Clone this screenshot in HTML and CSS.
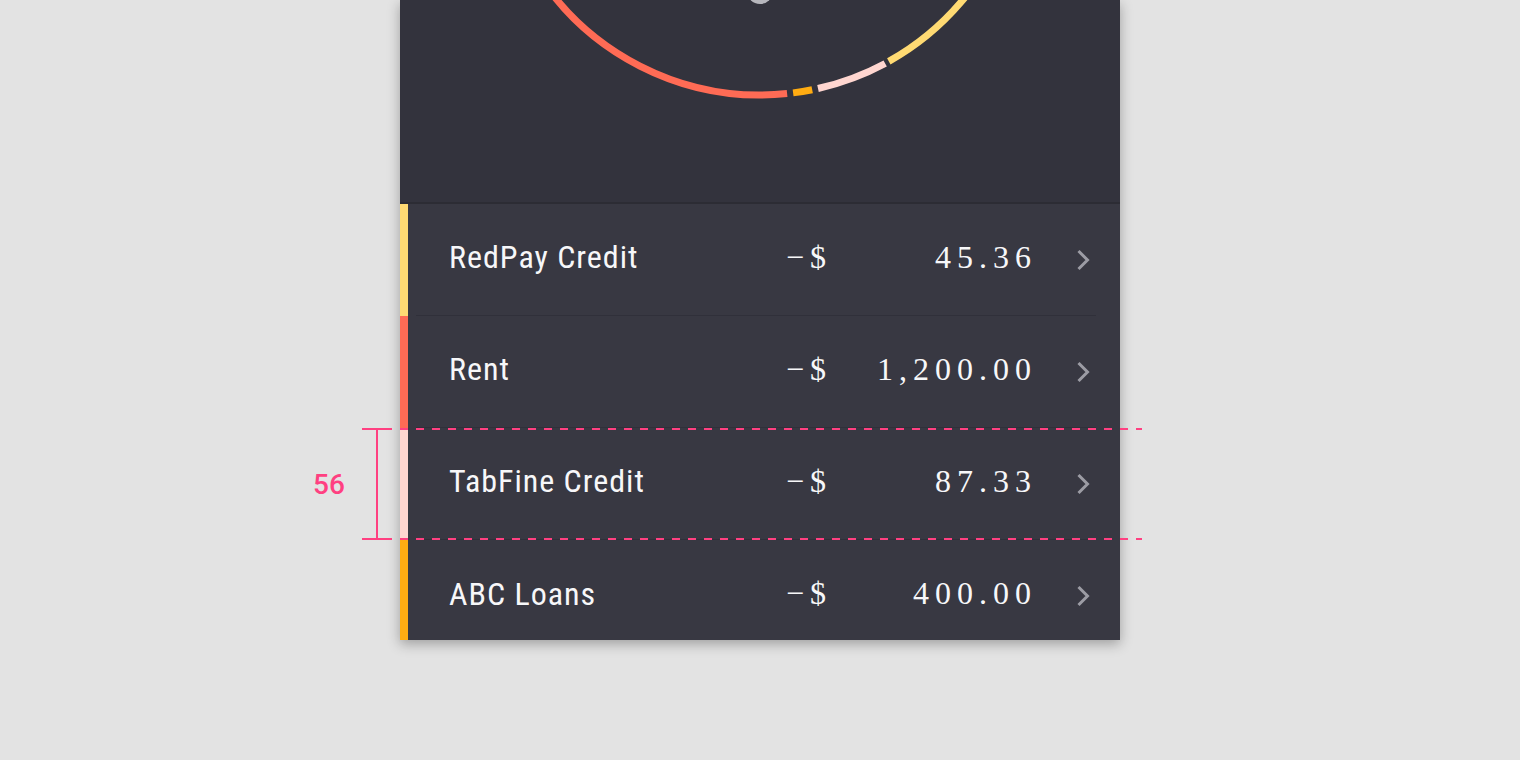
FILE: index.html
```html
<!DOCTYPE html>
<html lang="en">
<head>
    <meta charset="UTF-8">
    <meta name="viewport" content="width=device-width, initial-scale=1.0">
    <title>Spending Breakdown</title>
    <link rel="stylesheet" href="styles.css">
</head>
<body>
    <div class="page">
        <div class="card">
            <!-- Donut chart (top cut off) -->
            <div class="chart">
                <svg width="720" height="202" viewBox="0 0 720 202">
                    <circle cx="360" cy="-9" r="13" fill="#b6b6bc"/>
                    <g fill="none" stroke-width="7">
                        <path d="M131.4 -37 A264 264 0 0 0 387.1 93.6" stroke="#ff6b55"/>
                        <path d="M393.1 92.9 A264 264 0 0 0 412.2 89.8" stroke="#ffac12"/>
                        <path d="M418.0 88.5 A264 264 0 0 0 485.2 63.5" stroke="#ffd6d0"/>
                        <path d="M488.8 61.4 A264 264 0 0 0 608.1 -78.7" stroke="#ffda73"/>
                    </g>
                </svg>
            </div>

            <!-- Payments -->
            <div class="list">
                <div class="row row-yellow">
                    <div class="row-body">
                        <span class="name">RedPay Credit</span>
                        <span class="sign">&minus;$</span>
                        <span class="amount">45.36</span>
                        <svg class="chevron" width="18" height="24" viewBox="0 0 18 24"><path d="M4.5 3 L13.5 12 L4.5 21" fill="none" stroke="#9c9ca4" stroke-width="3"/></svg>
                    </div>
                </div>
                <div class="row row-red">
                    <div class="row-body">
                        <span class="name">Rent</span>
                        <span class="sign">&minus;$</span>
                        <span class="amount">1,200.00</span>
                        <svg class="chevron" width="18" height="24" viewBox="0 0 18 24"><path d="M4.5 3 L13.5 12 L4.5 21" fill="none" stroke="#9c9ca4" stroke-width="3"/></svg>
                    </div>
                </div>
                <div class="row row-pink">
                    <div class="row-body">
                        <span class="name">TabFine Credit</span>
                        <span class="sign">&minus;$</span>
                        <span class="amount">87.33</span>
                        <svg class="chevron" width="18" height="24" viewBox="0 0 18 24"><path d="M4.5 3 L13.5 12 L4.5 21" fill="none" stroke="#9c9ca4" stroke-width="3"/></svg>
                    </div>
                </div>
                <div class="row row-orange">
                    <div class="row-body">
                        <span class="name">ABC Loans</span>
                        <span class="sign">&minus;$</span>
                        <span class="amount">400.00</span>
                        <svg class="chevron" width="18" height="24" viewBox="0 0 18 24"><path d="M4.5 3 L13.5 12 L4.5 21" fill="none" stroke="#9c9ca4" stroke-width="3"/></svg>
                    </div>
                </div>
            </div>
        </div>

        <!-- Redline annotation -->
        <div class="guide guide-top"></div>
        <div class="guide guide-bottom"></div>
        <div class="measure">
            <span class="measure-label">56</span>
            <div class="measure-bar"></div>
        </div>
    </div>
</body>
</html>
```

FILE: styles.css
```css
body {
    margin: 0;
    background: #e3e3e3;
    font-family: "Roboto Condensed", Roboto, sans-serif;
    overflow: hidden;
}
.page {
    position: relative;
    height: 760px;
}
.card {
    width: 720px;
    height: 640px;
    margin: 0 auto;
    background: #383842;
    overflow: hidden;
    box-shadow: 0 4px 12px rgba(0, 0, 0, 0.3);
}
.chart {
    height: 202px;
    background: #33333d;
    border-bottom: 2px solid #2c2c34;
}
.chart svg {
    display: block;
}
.row {
    height: 112px;
    border-left: 8px solid #ffda73;
    box-sizing: border-box;
}
.row-red { border-left-color: #ff6b55; }
.row-pink { border-left-color: #ffd6d0; }
.row-orange { border-left-color: #ffac12; }
.row-body {
    height: 100%;
    box-sizing: border-box;
    margin: 0 24px 0 8px;
    padding: 0 4px 0 33px;
    display: flex;
    align-items: center;
    border-bottom: 1px solid #30303a;
    color: #f7f7f9;
}
.row:last-child .row-body {
    border-bottom: none;
}
.name {
    flex: 1;
    font-size: 32px;
    font-stretch: condensed;
    letter-spacing: 1px;
    margin-top: -5px;
}
.sign, .amount {
    font-family: "Liberation Serif", serif;
    font-size: 32px;
    letter-spacing: 6px;
    margin-top: -5px;
}
.sign {
    width: 48px;
}
.amount {
    width: 203px;
    text-align: right;
}
.chevron {
    display: block;
    margin-left: 37px;
}

/* redline overlay */
.guide {
    position: absolute;
    left: 400px;
    width: 742px;
    height: 2px;
    background: repeating-linear-gradient(to right, #ff4081 0 8px, transparent 8px 16px);
}
.guide-top { top: 428px; }
.guide-bottom { top: 538px; }
.measure {
    position: absolute;
    left: 300px;
    top: 428px;
    width: 92px;
    height: 112px;
}
.measure-bar {
    position: absolute;
    left: 62px;
    top: 0;
    width: 30px;
    height: 108px;
    border-top: 2px solid #ff4081;
    border-bottom: 2px solid #ff4081;
}
.measure-bar::after {
    content: "";
    position: absolute;
    left: 14px;
    top: 0;
    width: 2px;
    height: 100%;
    background: #ff4081;
}
.measure-label {
    position: absolute;
    left: 13px;
    top: 40px;
    font-family: Roboto, sans-serif;
    font-size: 28px;
    font-weight: 500;
    color: #ff4081;
}
```
